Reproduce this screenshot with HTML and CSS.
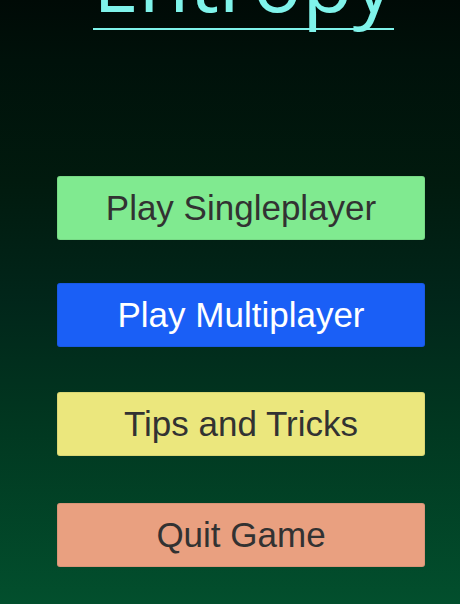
FILE: index.html
```html
<!DOCTYPE html>
<html lang="en">
<head>
<meta charset="utf-8">
<title>Entropy</title>
<link rel="stylesheet" href="styles.css">
</head>
<body>
<div class="screen">
  <header class="header">
    <h1 class="title">Entropy</h1>
  </header>
  <nav class="menu">
    <button class="btn btn-single">Play Singleplayer</button>
    <button class="btn btn-multi">Play Multiplayer</button>
    <button class="btn btn-tips">Tips and Tricks</button>
    <button class="btn btn-quit">Quit Game</button>
  </nav>
</div>
</body>
</html>
```
FILE: styles.css
```css
html, body {
  margin: 0;
  padding: 0;
}
body {
  width: 460px;
  height: 604px;
  overflow: hidden;
  background: linear-gradient(to bottom, #000a06 0%, #00110a 10%, #011a0e 30%, #01261a 50%, #013720 70%, #024f2d 100%);
}
.screen {
  height: 604px;
  display: flex;
  flex-direction: column;
}
.header {
  height: 30px;
  display: flex;
  justify-content: center;
  padding-left: 27px;
}
.title {
  margin: -61px 0 0 0;
  font-family: "Open Sans", "Noto Sans", sans-serif;
  font-weight: 400;
  font-size: 82.5px;
  line-height: 1;
  color: #7ff3ea;
  text-decoration: underline;
  text-decoration-thickness: 2px;
  text-underline-offset: 16px;
  text-decoration-skip-ink: none;
  white-space: nowrap;
}
.menu {
  display: flex;
  flex-direction: column;
  padding: 146px 0 0 57px;
}
.btn {
  width: 368px;
  height: 64px;
  border: none;
  border-radius: 3px;
  box-shadow: inset 0 0 0 1px rgba(0, 0, 0, 0.07);
  font-family: "Liberation Sans", Arial, sans-serif;
  font-size: 35px;
  color: #323232;
  padding: 0;
  display: flex;
  align-items: center;
  justify-content: center;
}
.btn-single {
  background: #80ea90;
}
.btn-multi {
  background: #1a5ff6;
  color: #ffffff;
  margin-top: 43px;
}
.btn-tips {
  background: #ebe77d;
  margin-top: 45px;
}
.btn-quit {
  background: #e9a080;
  margin-top: 47px;
}
```
